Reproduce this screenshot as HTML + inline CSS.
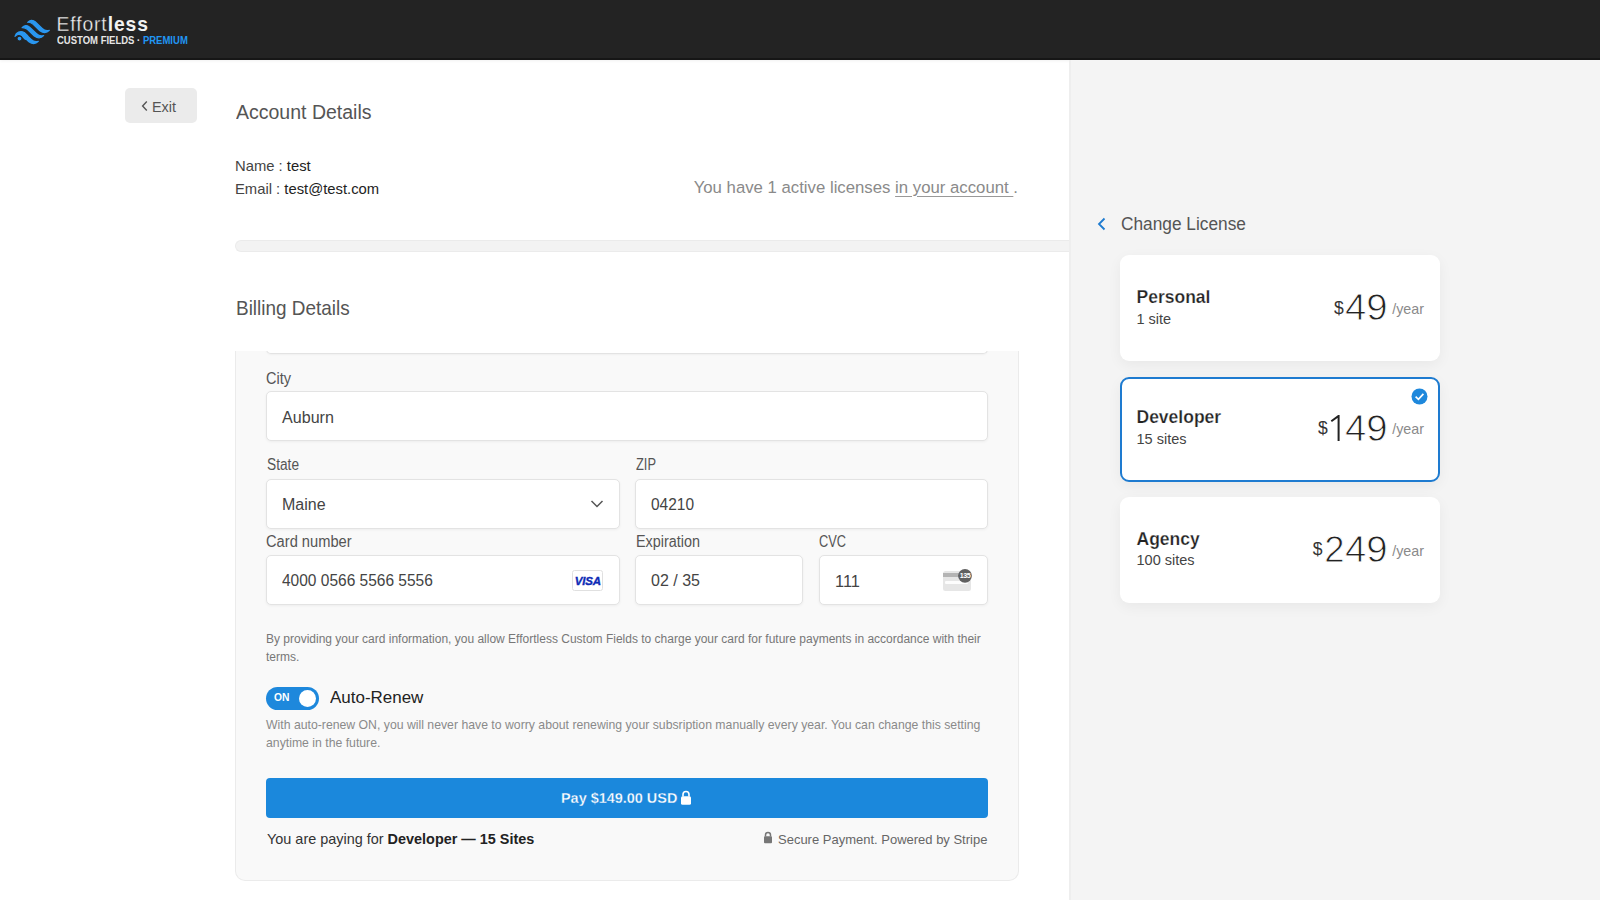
<!DOCTYPE html>
<html><head><meta charset="utf-8"><style>
html,body{margin:0;padding:0;}
body{width:1600px;height:900px;position:relative;overflow:hidden;background:#fff;font-family:"Liberation Sans",sans-serif;}
.r{position:absolute;}
.t{position:absolute;line-height:1;white-space:nowrap;}
</style></head><body>
<div class="r" style="left:0px;top:0px;width:1600px;height:60px;background:#232323;border-bottom:2px solid #161616;box-sizing:border-box;box-shadow:0 1px 3px rgba(0,0,0,0.06);"></div>
<svg class="r" style="left:0;top:0" width="60" height="60" viewBox="0 0 60 60"><g fill="#2a97f0" stroke="#2a97f0" stroke-width="1.2" stroke-linejoin="round"><path transform="translate(27.7,22.3)" d="M0 0 C2 -2.3 5 -2.8 7.5 -0.5 L14.5 6.2 C16.5 8.2 19 8.8 21.6 8 C19 10.8 15.5 10.8 12.2 8.5 L5.2 1.8 C3.5 0.3 1.8 -0.2 0 0 Z"/><path transform="translate(22.1,27.6)" d="M0 0 C2 -2.3 5 -2.8 7.5 -0.5 L14.5 6.2 C16.5 8.2 19 8.8 21.6 8 C19 10.8 15.5 10.8 12.2 8.5 L5.2 1.8 C3.5 0.3 1.8 -0.2 0 0 Z"/><path d="M15 36.3 C16 32.5 20.5 30.2 24.4 32.8 L27.6 35.8 L25.3 39.3 L22 36 C20 34.2 17 34.2 15 36.3 Z"/><path transform="translate(16.7,33.3)" d="M7.5 -0.5 L14.5 6.2 C16.5 8.2 19 8.8 21.6 8 C19 10.8 15.5 10.8 12.2 8.5 L5.2 1.8 Z"/></g><circle cx="19.5" cy="38.6" r="2.5" fill="#2a97f0" stroke="#232323" stroke-width="1.1"/></svg>
<div class="t " style="left:56.5px;top:14.66px;font-size:19.3px;color:#f2f2f2;font-weight:400;letter-spacing:0.9px;"><span style="-webkit-text-stroke:0.3px #232323">Effort</span><b>less</b></div>
<div class="t " style="left:56.5px;top:35.83px;font-size:10px;color:#e6e6e6;font-weight:700;transform:scaleX(0.9506);transform-origin:0 0;">CUSTOM FIELDS · <span style="color:#2196f3">PREMIUM</span></div>
<div class="r" style="left:1069px;top:60px;width:531px;height:840px;background:#f4f4f4;border-left:2px solid #eeeeee;box-sizing:border-box;"></div>
<div class="r" style="left:125px;top:88px;width:72px;height:35px;background:#ebebeb;border-radius:5px;"></div>
<svg class="r" style="left:140px;top:99px" width="10" height="14" viewBox="0 0 10 14"><path d="M6.8 2.5 L2.6 7 L6.8 11.5" fill="none" stroke="#555" stroke-width="1.4"/></svg>
<div class="t " style="left:152px;top:100.11px;font-size:14.4px;color:#555;font-weight:400;">Exit</div>
<div class="t " style="left:236px;top:101.66px;font-size:20px;color:#555;font-weight:400;transform:scaleX(0.9751);transform-origin:0 0;">Account Details</div>
<div class="t " style="left:235px;top:159.27px;font-size:14.8px;color:#444;font-weight:400;">Name : <span style="color:#222">test</span></div>
<div class="t " style="left:235px;top:181.97px;font-size:14.8px;color:#444;font-weight:400;">Email : <span style="color:#222">test@test.com</span></div>
<div class="t" style="right:582px;top:179.82px;font-size:16.75px;color:#8a8a8a;font-weight:400;">You have 1 active licenses <u style="text-underline-offset:3px;text-decoration-color:#999">in your account </u>.</div>
<div class="r" style="left:235px;top:240px;width:834px;height:12px;background:#f3f3f3;border:1px solid #ebebeb;border-right:none;border-radius:6px 0 0 6px;box-sizing:border-box;"></div>
<div class="t " style="left:236.3px;top:298.36px;font-size:20.6px;color:#555;font-weight:400;transform:scaleX(0.9195);transform-origin:0 0;">Billing Details</div>
<div class="r" style="left:235px;top:351px;width:784px;height:530px;background:#f9f9f9;border:1px solid #ebebeb;border-top:none;border-radius:0 0 10px 10px;box-sizing:border-box;"></div>
<div class="r" style="left:266px;top:330px;width:722px;height:24px;background:#fff;border:1px solid #e3e3e3;border-top:none;border-radius:0 0 5px 5px;box-sizing:border-box;box-shadow:0 1px 2px rgba(0,0,0,0.04);"></div>
<div class="r" style="left:236px;top:330px;width:782px;height:21px;background:#fff;"></div>
<div class="t " style="left:266.3px;top:370.62px;font-size:15.8px;color:#555555;font-weight:400;transform:scaleX(0.9188);transform-origin:0 0;">City</div>
<div class="r" style="left:266px;top:391px;width:722px;height:50px;background:#fff;border:1px solid #e3e3e3;border-radius:5px;box-sizing:border-box;box-shadow:0 1px 3px rgba(0,0,0,0.05);"></div>
<div class="t " style="left:282px;top:409.17px;font-size:16.1px;color:#444444;font-weight:400;">Auburn</div>
<div class="t " style="left:266.5px;top:457.45px;font-size:16px;color:#555555;font-weight:400;transform:scaleX(0.8565);transform-origin:0 0;">State</div>
<div class="r" style="left:266px;top:479px;width:354px;height:50px;background:#fff;border:1px solid #e3e3e3;border-radius:5px;box-sizing:border-box;box-shadow:0 1px 3px rgba(0,0,0,0.05);"></div>
<div class="t " style="left:282px;top:497.25px;font-size:16px;color:#444444;font-weight:400;">Maine</div>
<svg class="r" style="left:590px;top:499px" width="14" height="10" viewBox="0 0 14 10"><path d="M1.5 2 L7 7.5 L12.5 2" fill="none" stroke="#555" stroke-width="1.5"/></svg>
<div class="t " style="left:635.5px;top:457.25px;font-size:16px;color:#555555;font-weight:400;transform:scaleX(0.8035);transform-origin:0 0;">ZIP</div>
<div class="r" style="left:635px;top:479px;width:353px;height:50px;background:#fff;border:1px solid #e3e3e3;border-radius:5px;box-sizing:border-box;box-shadow:0 1px 3px rgba(0,0,0,0.05);"></div>
<div class="t " style="left:650.5px;top:497.25px;font-size:16px;color:#444444;font-weight:400;transform:scaleX(0.9664);transform-origin:0 0;">04210</div>
<div class="t " style="left:266.3px;top:534.32px;font-size:15.8px;color:#555555;font-weight:400;transform:scaleX(0.9283);transform-origin:0 0;">Card number</div>
<div class="r" style="left:266px;top:555px;width:354px;height:50px;background:#fff;border:1px solid #e3e3e3;border-radius:5px;box-sizing:border-box;box-shadow:0 1px 3px rgba(0,0,0,0.05);"></div>
<div class="t " style="left:282.3px;top:572.85px;font-size:16px;color:#444444;font-weight:400;transform:scaleX(0.9684);transform-origin:0 0;">4000 0566 5566 5556</div>
<div class="r" style="left:572px;top:570px;width:31px;height:21px;background:#fff;border:1px solid #e0e0e0;border-radius:2.5px;box-sizing:border-box;"></div>
<div class="t " style="left:574.8px;top:576.36px;font-size:11.5px;color:#0d2bb5;font-weight:700;font-style:italic;letter-spacing:-0.2px;-webkit-text-stroke:0.35px #0d2bb5;">VISA</div>
<div class="t " style="left:635.5px;top:534.42px;font-size:15.8px;color:#555555;font-weight:400;transform:scaleX(0.9109);transform-origin:0 0;">Expiration</div>
<div class="r" style="left:635px;top:555px;width:168px;height:50px;background:#fff;border:1px solid #e3e3e3;border-radius:5px;box-sizing:border-box;box-shadow:0 1px 3px rgba(0,0,0,0.05);"></div>
<div class="t " style="left:651px;top:573.25px;font-size:16px;color:#444444;font-weight:400;">02 / 35</div>
<div class="t " style="left:819.3px;top:534.22px;font-size:15.8px;color:#555555;font-weight:400;transform:scaleX(0.8093);transform-origin:0 0;">CVC</div>
<div class="r" style="left:819px;top:555px;width:169px;height:50px;background:#fff;border:1px solid #e3e3e3;border-radius:5px;box-sizing:border-box;box-shadow:0 1px 3px rgba(0,0,0,0.05);"></div>
<div class="t " style="left:835px;top:572.91px;font-size:16.4px;color:#444444;font-weight:400;">111</div>
<div class="r" style="left:942.5px;top:570.5px;width:28.5px;height:20.0px;background:#e6e6e6;border-radius:2.5px;"></div>
<div class="r" style="left:942.5px;top:573px;width:23.5px;height:3.5px;background:#b4b4b4;"></div>
<div class="r" style="left:945px;top:580.8px;width:23px;height:3.2000000000000455px;background:#fdfdfd;border-radius:1px;"></div>
<svg class="r" style="left:957px;top:568px" width="16" height="16" viewBox="0 0 16 16"><circle cx="8" cy="7.8" r="6.9" fill="#606060"/><text x="8" y="10.3" style="font-family:'Liberation Sans';font-size:7.2px;font-weight:700;letter-spacing:-0.5px" fill="#fff" text-anchor="middle">135</text></svg>
<div class="t" style="left:266px;top:629.64px;width:730px;font-size:12px;line-height:18px;color:#777;">By providing your card information, you allow Effortless Custom Fields to charge your card for future payments in accordance with their<br>terms.</div>
<div class="r" style="left:266px;top:687px;width:53px;height:23px;background:#1e88dc;border-radius:12px;"></div>
<div class="r" style="left:299px;top:690px;width:17px;height:17px;background:#fff;border-radius:50%;"></div>
<div class="t " style="left:274px;top:692.88px;font-size:10.3px;color:#fff;font-weight:700;">ON</div>
<div class="t " style="left:329.7px;top:689.94px;font-size:16.6px;color:#222;font-weight:400;transform:scaleX(1.0224);transform-origin:0 0;">Auto-Renew</div>
<div class="t" style="left:266px;top:717.15px;width:730px;font-size:12.25px;line-height:17.8px;color:#8a8a8a;">With auto-renew ON, you will never have to worry about renewing your subsription manually every year. You can change this setting<br>anytime in the future.</div>
<div class="r" style="left:266px;top:778px;width:722px;height:40px;background:#1b88dc;border-radius:4px;"></div>
<div class="t " style="left:560.8px;top:790.95px;font-size:14.7px;color:#fff;font-weight:700;-webkit-text-stroke:0.3px #1b88dc;transform:scaleX(0.9823);transform-origin:0 0;">Pay $149.00 USD</div>
<svg class="r" style="left:680px;top:790px" width="12" height="15" viewBox="0 0 12 15"><path d="M3 6.5 V4.5 A3 3 0 0 1 9 4.5 V6.5" fill="none" stroke="#fff" stroke-width="1.6"/><rect x="1" y="6.3" width="10" height="8.4" rx="1.5" fill="#fff"/></svg>
<div class="t " style="left:266.5px;top:832.07px;font-size:14.8px;color:#333;font-weight:400;transform:scaleX(0.975);transform-origin:0 0;">You are paying for <b style="color:#222">Developer — 15 Sites</b></div>
<svg class="r" style="left:763px;top:831px" width="10" height="13" viewBox="0 0 10 13"><path d="M2.5 5.5 V4 A2.5 2.5 0 0 1 7.5 4 V5.5" fill="none" stroke="#777" stroke-width="1.5"/><rect x="1" y="5.3" width="8" height="7" rx="1" fill="#777"/></svg>
<div class="t " style="left:778px;top:832.71px;font-size:13.1px;color:#666;font-weight:400;transform:scaleX(0.9921);transform-origin:0 0;">Secure Payment. Powered by Stripe</div>
<svg class="r" style="left:1094px;top:215px" width="14" height="18" viewBox="0 0 14 18"><path d="M10.5 3.5 L5 9 L10.5 14.5" fill="none" stroke="#1e7bd0" stroke-width="1.8"/></svg>
<div class="t " style="left:1120.8px;top:215.00px;font-size:18.3px;color:#555;font-weight:400;transform:scaleX(0.9458);transform-origin:0 0;">Change License</div>
<div class="r" style="left:1120px;top:255px;width:320px;height:106px;background:#fff;border-radius:9px;box-shadow:0 4px 14px rgba(0,0,0,0.05);"></div>
<div class="r" style="left:1120px;top:377px;width:320px;height:105px;background:#fff;border:2px solid #1e7bd0;border-radius:9px;box-sizing:border-box;box-shadow:0 4px 14px rgba(0,0,0,0.05);"></div>
<div class="r" style="left:1120px;top:497px;width:320px;height:106px;background:#fff;border-radius:9px;box-shadow:0 4px 14px rgba(0,0,0,0.05);"></div>
<div class="t " style="left:1136.5px;top:288.78px;font-size:17.5px;color:#222;font-weight:700;-webkit-text-stroke:0.25px #fff;">Personal</div>
<div class="t " style="left:1136.5px;top:312.32px;font-size:14.5px;color:#444;font-weight:400;">1 site</div>
<div class="t" style="right:176px;top:301.79px;font-size:14.3px;color:#8a8a8a;font-weight:400;">/year</div>
<div class="t" style="right:212px;top:289.99px;font-size:36.5px;color:#222;-webkit-text-stroke:0.9px #fff;transform:scaleX(1.05);transform-origin:100% 0;">49</div>
<div class="t " style="left:1333.9px;top:299.88px;font-size:17.5px;color:#333;font-weight:400;">$</div>
<div class="t " style="left:1136.5px;top:409.48px;font-size:17.5px;color:#222;font-weight:700;-webkit-text-stroke:0.25px #fff;">Developer</div>
<div class="t " style="left:1136.5px;top:432.22px;font-size:14.5px;color:#444;font-weight:400;">15 sites</div>
<div class="t" style="right:176px;top:422.49px;font-size:14.3px;color:#8a8a8a;font-weight:400;">/year</div>
<div class="t" style="right:212px;top:410.69px;font-size:36.5px;color:#222;-webkit-text-stroke:0.9px #fff;transform:scaleX(1.05);transform-origin:100% 0;">49</div>
<svg class="r" style="left:1329px;top:414.80px" width="13" height="27" viewBox="0 0 13 27"><path d="M2.3 6.3 L9.6 0.9 V25.9" fill="none" stroke="#222" stroke-width="2" stroke-linejoin="miter"/></svg>
<div class="t " style="left:1318.1000000000001px;top:420.18px;font-size:17.5px;color:#333;font-weight:400;">$</div>
<div class="t " style="left:1136.5px;top:530.78px;font-size:17.5px;color:#222;font-weight:700;-webkit-text-stroke:0.25px #fff;">Agency</div>
<div class="t " style="left:1136.5px;top:553.32px;font-size:14.5px;color:#444;font-weight:400;">100 sites</div>
<div class="t" style="right:176px;top:543.89px;font-size:14.3px;color:#8a8a8a;font-weight:400;">/year</div>
<div class="t" style="right:212px;top:532.09px;font-size:36.5px;color:#222;-webkit-text-stroke:0.9px #fff;transform:scaleX(1.05);transform-origin:100% 0;">49</div>
<div class="t" style="left:1324.2px;top:532.09px;font-size:36.5px;color:#222;-webkit-text-stroke:0.9px #fff;">2</div>
<div class="t " style="left:1312.8px;top:540.98px;font-size:17.5px;color:#333;font-weight:400;">$</div>
<svg class="r" style="left:1411px;top:388px" width="17" height="17" viewBox="0 0 17 17"><circle cx="8.5" cy="8.5" r="8" fill="#1e88dc"/><path d="M4.6 8.7 L7.4 11.3 L12.4 5.9" fill="none" stroke="#fff" stroke-width="1.7"/></svg>
</body></html>
